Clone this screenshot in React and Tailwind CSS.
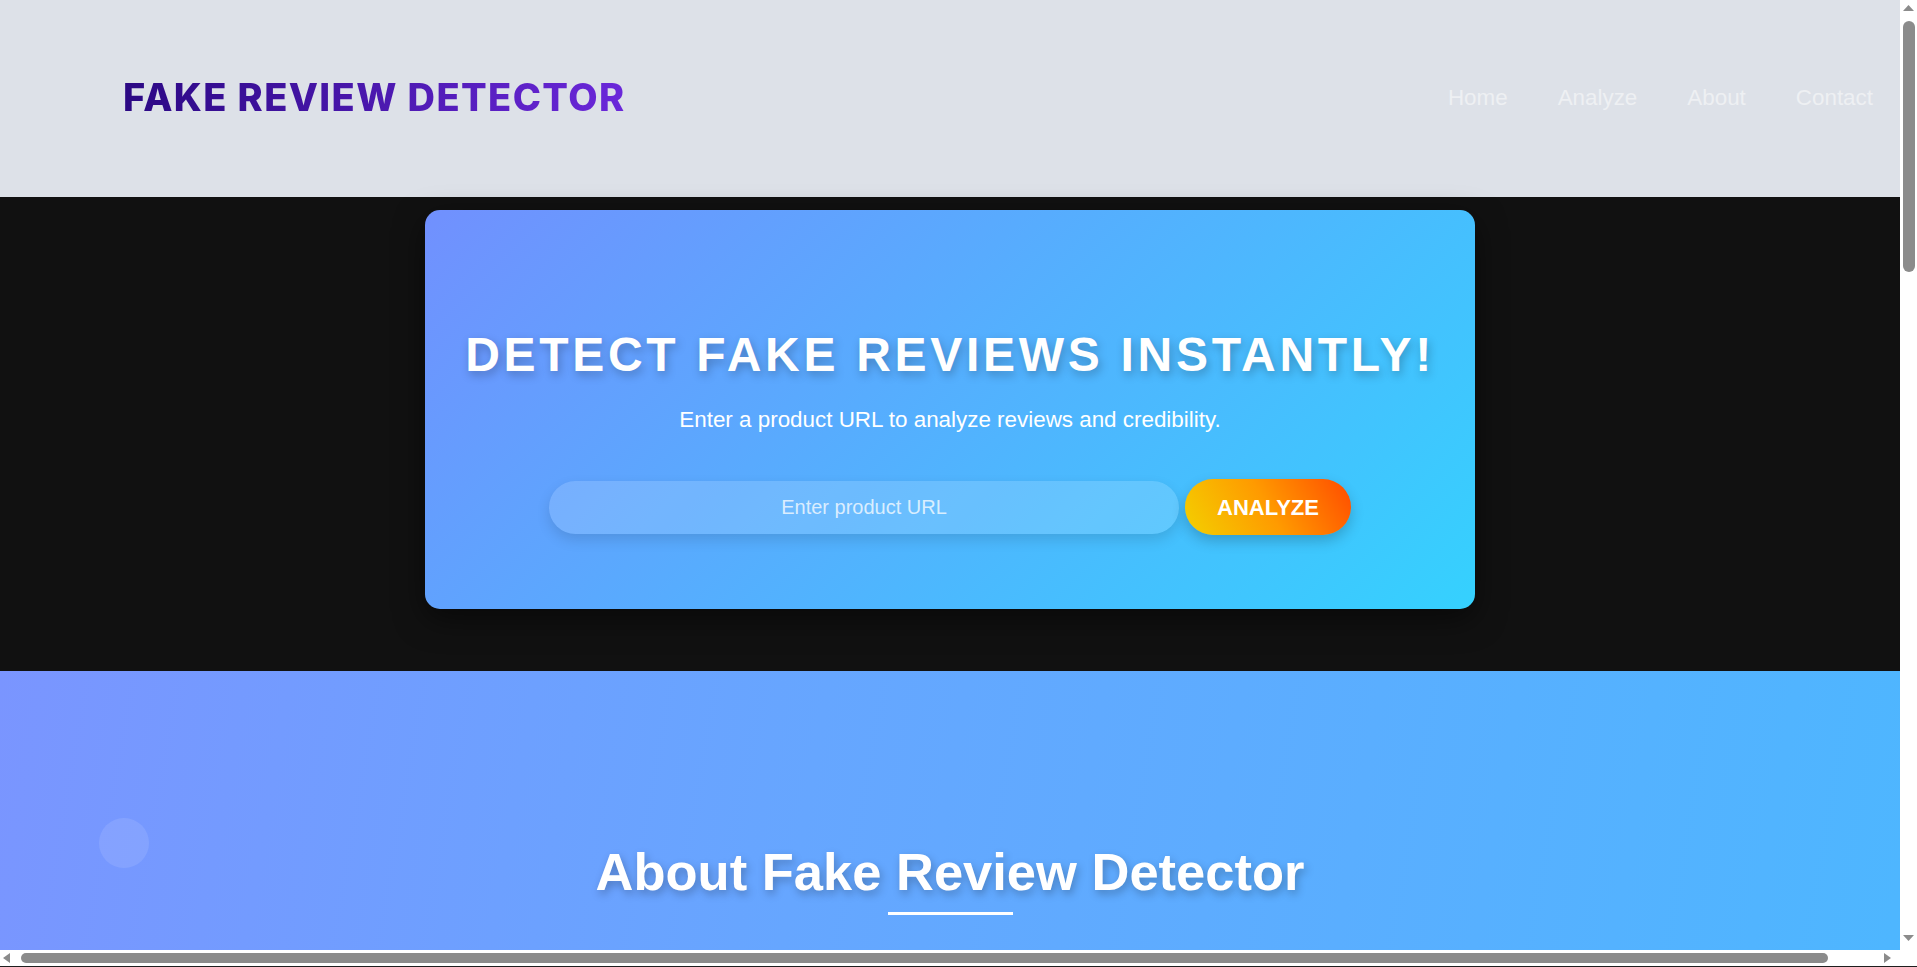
import React from "react";

const features = [
  { title: "AI-Powered Analysis", text: "Our model inspects wording, sentiment and patterns to spot reviews that were written to mislead." },
  { title: "Credibility Score", text: "Every product receives a clear score so you can judge how trustworthy its reviews really are." },
  { title: "Instant Results", text: "Paste a product link and get a full breakdown of genuine and suspicious reviews in seconds." },
];

function Arrow({ dir }) {
  const pts = {
    up: "0,6 5.5,0 11,6",
    down: "0,0 5.5,6 11,0",
    left: "7,0 0,5 7,10",
    right: "0,0 7,5 0,10",
  }[dir];
  const vertical = dir === "up" || dir === "down";
  return (
    <svg width={vertical ? 11 : 7} height={vertical ? 6 : 10} viewBox={vertical ? "0 0 11 6" : "0 0 7 10"} className="shrink-0">
      <polygon points={pts} fill="#8b8b8b" />
    </svg>
  );
}

function Page() {
  return (
    <>
      {/* Header */}
      <header className="w-[1962px] h-[197px] bg-[#dde1e8] flex items-center justify-between pl-[123px] pr-[89px]">
        <h1 className="pb-[4px] font-['Inter',sans-serif] font-extrabold text-[38px] leading-none tracking-[1.4px] bg-[linear-gradient(to_right,#2b0883,#6b28da)] bg-clip-text text-transparent">
          FAKE REVIEW DETECTOR
        </h1>
        <nav className="pb-[2px] flex items-center gap-[50px] text-[22.4px] text-[#eef0f3]">
          <a href="#home">Home</a>
          <a href="#analyze">Analyze</a>
          <a href="#about">About</a>
          <a href="#contact">Contact</a>
        </nav>
      </header>

      {/* Hero */}
      <section id="analyze" className="w-[1900px] bg-[#111111] pt-[13px] pb-[62px] flex justify-center">
        <div className="w-[1050px] h-[399px] rounded-[15px] bg-[linear-gradient(135deg,#7190fe,#35d1fe)] shadow-[0_10px_30px_rgba(0,0,0,0.5)] flex flex-col items-center pt-[121px]">
          <h2 className="text-[48px] leading-none font-bold tracking-[3.7px] [text-shadow:2px_4px_10px_rgba(0,0,0,0.25)]">
            DETECT FAKE REVIEWS INSTANTLY!
          </h2>
          <p className="mt-[30px] text-[22.4px] leading-none text-white">
            Enter a product URL to analyze reviews and credibility.
          </p>
          <div className="mt-[48px] flex items-center gap-[6px]">
            <input
              type="text"
              placeholder="Enter product URL"
              className="w-[630px] h-[53px] rounded-full bg-white/15 text-center text-[20px] text-white placeholder:text-white/75 outline-none shadow-[0_6px_14px_rgba(0,0,0,0.12)]"
            />
            <button className="w-[166px] h-[56px] rounded-full bg-[linear-gradient(60deg,#f3d000,#ff9a00_50%,#ff4b00)] text-[22px] font-bold text-white shadow-[0_6px_14px_rgba(0,0,0,0.2)]">
              ANALYZE
            </button>
          </div>
        </div>
      </section>

      {/* About */}
      <section id="about" className="relative w-[1900px] h-[1000px] bg-[linear-gradient(100deg,#7a95ff,#66a6ff_40%,#4bb8ff)] pt-[175px] flex flex-col items-center overflow-hidden">
        <div className="absolute left-[99px] top-[147px] w-[50px] h-[50px] rounded-full bg-white/10" />
        <h2 className="text-[52.5px] leading-none font-bold [text-shadow:2px_4px_8px_rgba(0,0,0,0.25)]">
          About Fake Review Detector
        </h2>
        <div className="mt-[13px] w-[125px] h-[3px] bg-white" />
        <p className="mt-[60px] w-[900px] text-center text-[20px] leading-[1.7] text-white/90">
          Fake Review Detector helps shoppers make informed decisions by analyzing product reviews for signs of
          manipulation. Using natural language processing and machine learning, it identifies suspicious patterns,
          repeated phrases and unnatural sentiment so you can trust what you read.
        </p>
      </section>

      {/* Features */}
      <section className="w-[1900px] h-[900px] bg-[#f4f6fb] flex flex-col items-center pt-[120px] text-[#222]">
        <h2 className="text-[44px] font-bold">Why Use It?</h2>
        <div className="mt-[60px] flex gap-[40px]">
          {features.map((f) => (
            <div key={f.title} className="w-[360px] h-[300px] rounded-[15px] bg-white shadow-[0_10px_30px_rgba(0,0,0,0.08)] p-[32px] flex flex-col gap-[16px]">
              <h3 className="text-[24px] font-bold text-[#4b2bd0]">{f.title}</h3>
              <p className="text-[18px] leading-[1.6] text-[#555]">{f.text}</p>
            </div>
          ))}
        </div>
      </section>

      {/* Contact */}
      <section id="contact" className="w-[1900px] h-[600px] bg-[#111111] flex flex-col items-center pt-[100px]">
        <h2 className="text-[44px] font-bold">Contact Us</h2>
        <div className="mt-[40px] flex flex-col gap-[16px] w-[600px]">
          <input placeholder="Your Name" className="h-[50px] rounded-full bg-white/10 px-[24px] text-[18px] outline-none" />
          <input placeholder="Your Email" className="h-[50px] rounded-full bg-white/10 px-[24px] text-[18px] outline-none" />
          <button className="h-[50px] rounded-full bg-[linear-gradient(60deg,#f3d000,#ff4b00)] text-[20px] font-bold">SEND</button>
        </div>
      </section>

      <footer className="w-[1900px] h-[200px] bg-[#0a0a0a] flex items-center justify-center text-[16px] text-white/60">
        © 2024 Fake Review Detector. All rights reserved.
      </footer>
    </>
  );
}

export default function App() {
  return (
    <div className="w-[1917px] h-[967px] flex flex-col overflow-hidden bg-white font-['Liberation_Sans',Arial,sans-serif] text-white">
      <div className="flex h-[950px]">
        <main className="w-[1900px] h-full overflow-auto [scrollbar-width:none]">
          <Page />
        </main>
        {/* vertical scrollbar */}
        <div className="w-[17px] h-full bg-white flex flex-col items-center pt-[5px] pb-[9px]">
          <Arrow dir="up" />
          <div className="mt-[10px] w-[12px] h-[251px] rounded-full bg-[#8b8b8b]" />
          <div className="flex-1" />
          <Arrow dir="down" />
        </div>
      </div>
      {/* horizontal scrollbar */}
      <div className="flex h-[17px] border-b border-[#1e1e1e]">
        <div className="w-[1900px] h-full bg-white flex items-center pl-[3px] pr-[9px]">
          <Arrow dir="left" />
          <div className="ml-[11px] w-[1807px] h-[10px] rounded-full bg-[#8b8b8b]" />
          <div className="flex-1" />
          <Arrow dir="right" />
        </div>
        <div className="w-[17px] h-full bg-white" />
      </div>
    </div>
  );
}
